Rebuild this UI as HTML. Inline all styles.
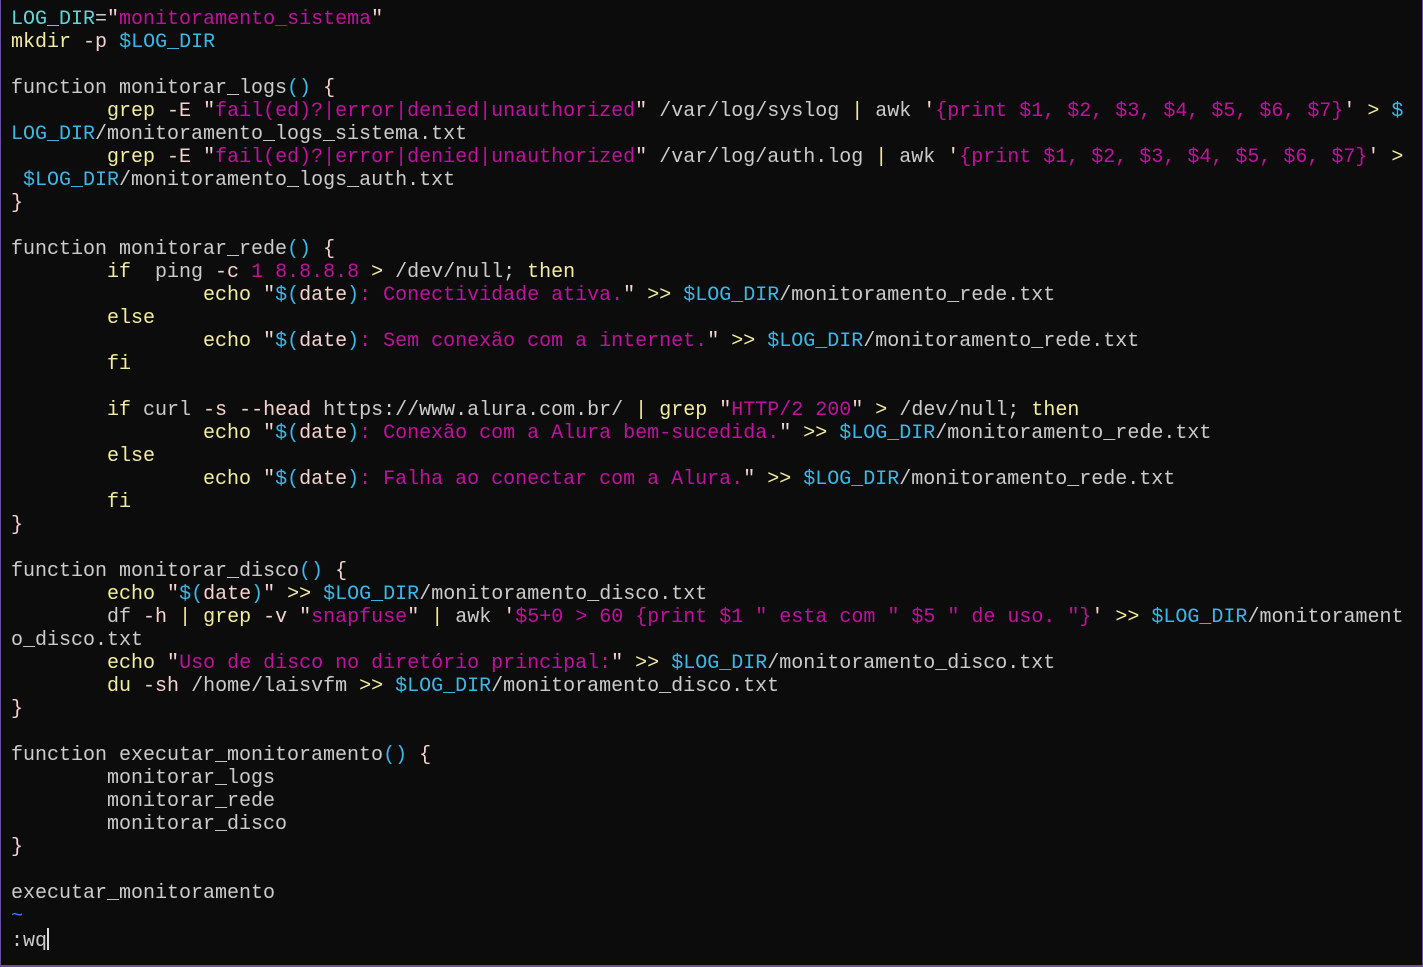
<!DOCTYPE html>
<html><head><meta charset="utf-8"><style>
html,body{margin:0;padding:0;background:#0c0c0c;}
body{width:1423px;height:967px;overflow:hidden;position:relative;box-sizing:border-box;border-left:1px solid #6b4fa0;border-right:1px solid #6b4fa0;border-bottom:2px solid #6b4fa0;}
pre{margin:0;position:absolute;left:10px;top:8px;font-family:"Liberation Mono",monospace;font-size:20px;line-height:23px;color:#cccccc;white-space:pre;}
.c{color:#61d6d6}.m{color:#c0119e}.y{color:#f3ee9f}.p{color:#f5d3cf}.b{color:#3bb8e8}.t{color:#3b78ff}
.cur{display:inline-block;width:2px;height:22px;background:#ddd;vertical-align:-4px}
</style></head><body><pre><span class="c">LOG_DIR</span>=<span class="p">"</span><span class="m">monitoramento_sistema</span><span class="p">"</span>
<span class="y">mkdir</span> <span class="p">-p</span> <span class="b">$LOG_DIR</span>

function monitorar_logs<span class="b">()</span> <span class="p">{</span>
        <span class="y">grep</span> <span class="p">-E</span> <span class="p">"</span><span class="m">fail(ed)?|error|denied|unauthorized</span><span class="p">"</span> /var/log/syslog <span class="y">|</span> awk <span class="p">'</span><span class="m">{print $1, $2, $3, $4, $5, $6, $7}</span><span class="p">'</span> <span class="y">&gt;</span> <span class="b">$</span>
<span class="b">LOG_DIR</span>/monitoramento_logs_sistema.txt
        <span class="y">grep</span> <span class="p">-E</span> <span class="p">"</span><span class="m">fail(ed)?|error|denied|unauthorized</span><span class="p">"</span> /var/log/auth.log <span class="y">|</span> awk <span class="p">'</span><span class="m">{print $1, $2, $3, $4, $5, $6, $7}</span><span class="p">'</span> <span class="y">&gt;</span>
 <span class="b">$LOG_DIR</span>/monitoramento_logs_auth.txt
<span class="p">}</span>

function monitorar_rede<span class="b">()</span> <span class="p">{</span>
        <span class="y">if</span>  ping <span class="p">-c</span> <span class="m">1 8.8.8.8</span> <span class="y">&gt;</span> /dev/null; <span class="y">then</span>
                <span class="y">echo</span> <span class="p">"</span><span class="b">$(</span><span class="p">date</span><span class="b">)</span><span class="m">: Conectividade ativa.</span><span class="p">"</span> <span class="y">&gt;&gt;</span> <span class="b">$LOG_DIR</span>/monitoramento_rede.txt
        <span class="y">else</span>
                <span class="y">echo</span> <span class="p">"</span><span class="b">$(</span><span class="p">date</span><span class="b">)</span><span class="m">: Sem conexão com a internet.</span><span class="p">"</span> <span class="y">&gt;&gt;</span> <span class="b">$LOG_DIR</span>/monitoramento_rede.txt
        <span class="y">fi</span>

        <span class="y">if</span> curl <span class="p">-s</span> <span class="p">--head</span> https://www.alura.com.br/ <span class="y">|</span> <span class="y">grep</span> <span class="p">"</span><span class="m">HTTP/2 200</span><span class="p">"</span> <span class="y">&gt;</span> /dev/null; <span class="y">then</span>
                <span class="y">echo</span> <span class="p">"</span><span class="b">$(</span><span class="p">date</span><span class="b">)</span><span class="m">: Conexão com a Alura bem-sucedida.</span><span class="p">"</span> <span class="y">&gt;&gt;</span> <span class="b">$LOG_DIR</span>/monitoramento_rede.txt
        <span class="y">else</span>
                <span class="y">echo</span> <span class="p">"</span><span class="b">$(</span><span class="p">date</span><span class="b">)</span><span class="m">: Falha ao conectar com a Alura.</span><span class="p">"</span> <span class="y">&gt;&gt;</span> <span class="b">$LOG_DIR</span>/monitoramento_rede.txt
        <span class="y">fi</span>
<span class="p">}</span>

function monitorar_disco<span class="b">()</span> <span class="p">{</span>
        <span class="y">echo</span> <span class="p">"</span><span class="b">$(</span><span class="p">date</span><span class="b">)</span><span class="p">"</span> <span class="y">&gt;&gt;</span> <span class="b">$LOG_DIR</span>/monitoramento_disco.txt
        df <span class="p">-h</span> <span class="y">|</span> <span class="y">grep</span> <span class="p">-v</span> <span class="p">"</span><span class="m">snapfuse</span><span class="p">"</span> <span class="y">|</span> awk <span class="p">'</span><span class="m">$5+0 &gt; 60 {print $1 " esta com " $5 " de uso. "}</span><span class="p">'</span> <span class="y">&gt;&gt;</span> <span class="b">$LOG_DIR</span>/monitorament
o_disco.txt
        <span class="y">echo</span> <span class="p">"</span><span class="m">Uso de disco no diretório principal:</span><span class="p">"</span> <span class="y">&gt;&gt;</span> <span class="b">$LOG_DIR</span>/monitoramento_disco.txt
        <span class="y">du</span> <span class="p">-sh</span> /home/laisvfm <span class="y">&gt;&gt;</span> <span class="b">$LOG_DIR</span>/monitoramento_disco.txt
<span class="p">}</span>

function executar_monitoramento<span class="b">()</span> <span class="p">{</span>
        monitorar_logs
        monitorar_rede
        monitorar_disco
<span class="p">}</span>

executar_monitoramento
<span class="t">~</span>
:wq<span class="cur"></span></pre></body></html>
